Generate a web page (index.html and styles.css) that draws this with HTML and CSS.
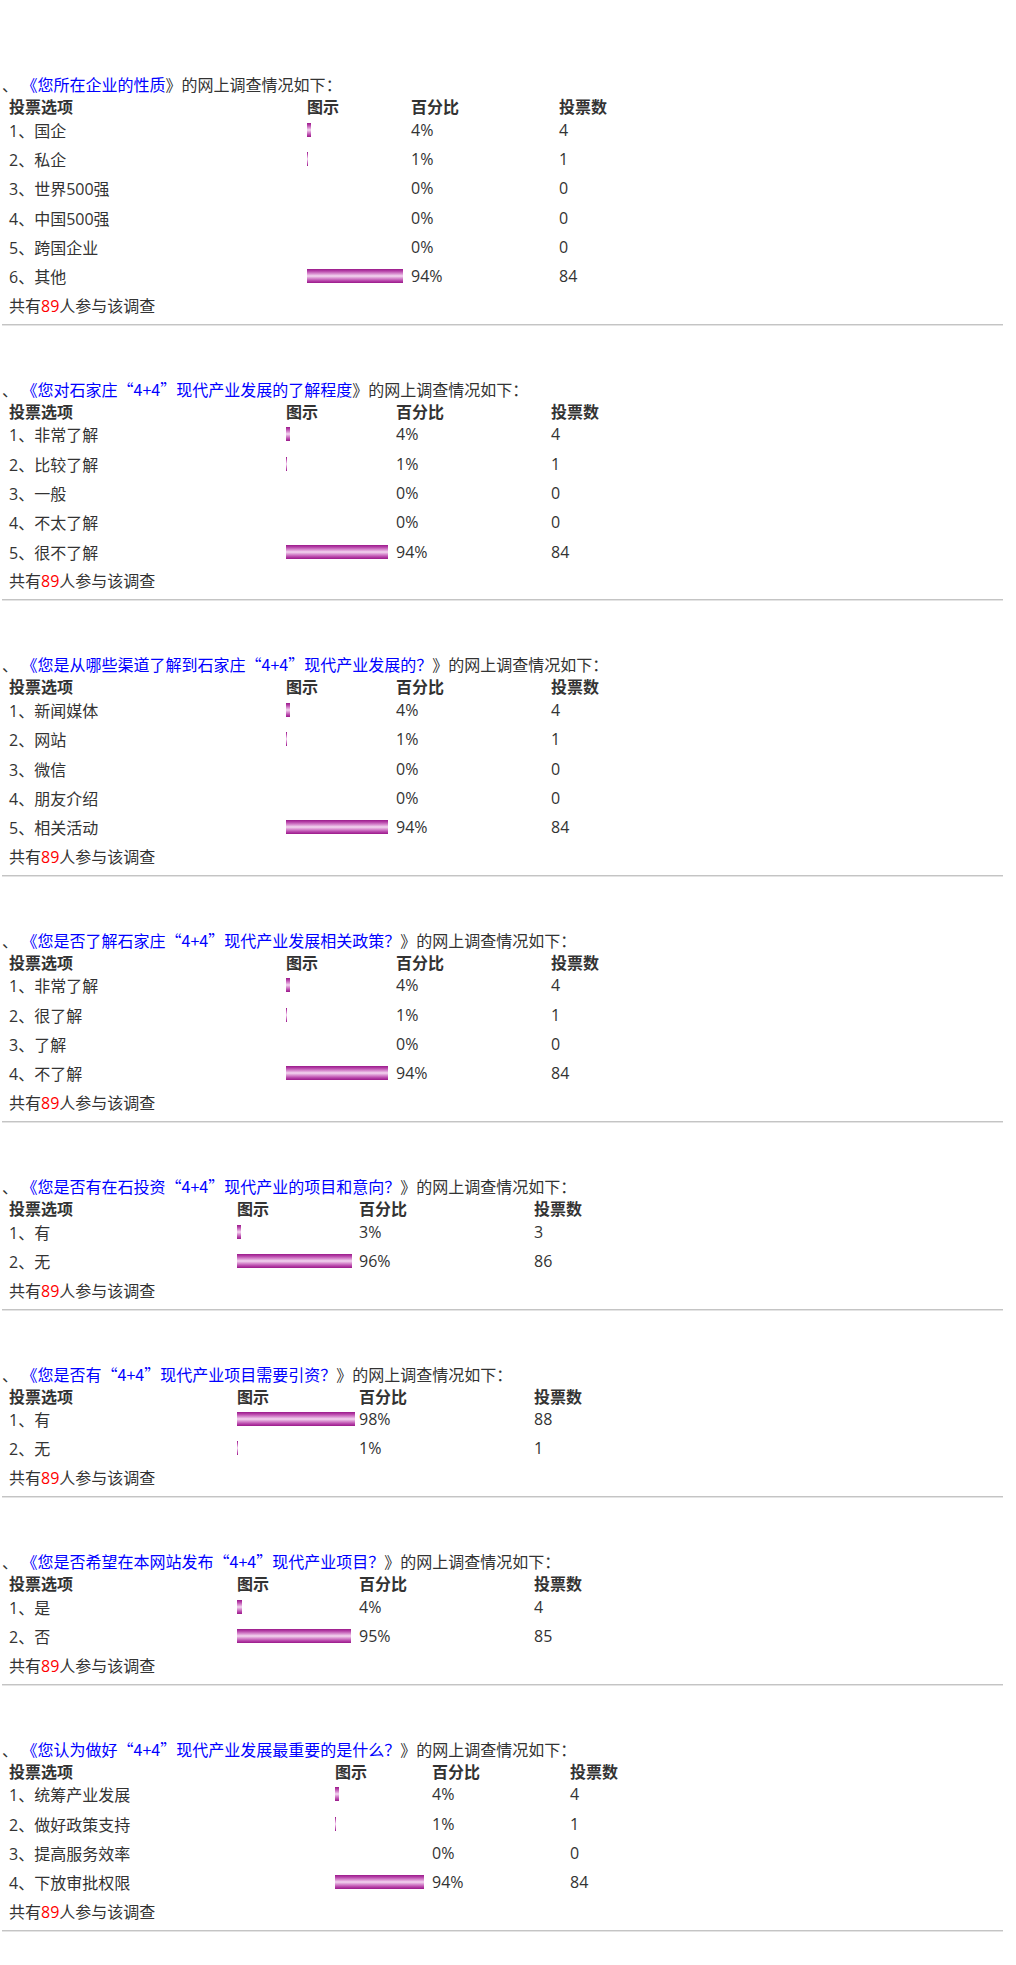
FILE: index.html
```html
<!DOCTYPE html>
<html lang="zh-CN">
<head>
<meta charset="utf-8">
<title>网上调查</title>
<link rel="stylesheet" href="styles.css">
</head>
<body>
<div class="page">

<section class="survey s1">
  <div class="title">、 <a href="#">《您所在企业的性质</a>》的网上调查情况如下<span class="punc">：</span></div>
  <div class="row head"><span>投票选项</span><span>图示</span><span>百分比</span><span>投票数</span></div>
  <div class="row"><span>1、国企</span><span class="cell-bar"><i class="bar" style="width:4%"></i></span><span>4%</span><span>4</span></div>
  <div class="row"><span>2、私企</span><span class="cell-bar"><i class="bar" style="width:1%"></i></span><span>1%</span><span>1</span></div>
  <div class="row"><span>3、世界500强</span><span class="cell-bar"></span><span>0%</span><span>0</span></div>
  <div class="row"><span>4、中国500强</span><span class="cell-bar"></span><span>0%</span><span>0</span></div>
  <div class="row"><span>5、跨国企业</span><span class="cell-bar"></span><span>0%</span><span>0</span></div>
  <div class="row"><span>6、其他</span><span class="cell-bar"><i class="bar" style="width:94%"></i></span><span>94%</span><span>84</span></div>
  <div class="total">共有<em>89</em>人参与该调查</div>
</section>
<hr class="sep">

<section class="survey s2">
  <div class="title">、 <a href="#">《您对石家庄“4+4”现代产业发展的了解程度</a>》的网上调查情况如下<span class="punc">：</span></div>
  <div class="row head"><span>投票选项</span><span>图示</span><span>百分比</span><span>投票数</span></div>
  <div class="row"><span>1、非常了解</span><span class="cell-bar"><i class="bar" style="width:4%"></i></span><span>4%</span><span>4</span></div>
  <div class="row"><span>2、比较了解</span><span class="cell-bar"><i class="bar" style="width:1%"></i></span><span>1%</span><span>1</span></div>
  <div class="row"><span>3、一般</span><span class="cell-bar"></span><span>0%</span><span>0</span></div>
  <div class="row"><span>4、不太了解</span><span class="cell-bar"></span><span>0%</span><span>0</span></div>
  <div class="row"><span>5、很不了解</span><span class="cell-bar"><i class="bar" style="width:94%"></i></span><span>94%</span><span>84</span></div>
  <div class="total">共有<em>89</em>人参与该调查</div>
</section>
<hr class="sep">

<section class="survey s2">
  <div class="title">、 <a href="#">《您是从哪些渠道了解到石家庄“4+4”现代产业发展的<span class="punc">？</span></a>》的网上调查情况如下<span class="punc">：</span></div>
  <div class="row head"><span>投票选项</span><span>图示</span><span>百分比</span><span>投票数</span></div>
  <div class="row"><span>1、新闻媒体</span><span class="cell-bar"><i class="bar" style="width:4%"></i></span><span>4%</span><span>4</span></div>
  <div class="row"><span>2、网站</span><span class="cell-bar"><i class="bar" style="width:1%"></i></span><span>1%</span><span>1</span></div>
  <div class="row"><span>3、微信</span><span class="cell-bar"></span><span>0%</span><span>0</span></div>
  <div class="row"><span>4、朋友介绍</span><span class="cell-bar"></span><span>0%</span><span>0</span></div>
  <div class="row"><span>5、相关活动</span><span class="cell-bar"><i class="bar" style="width:94%"></i></span><span>94%</span><span>84</span></div>
  <div class="total">共有<em>89</em>人参与该调查</div>
</section>
<hr class="sep">

<section class="survey s2">
  <div class="title">、 <a href="#">《您是否了解石家庄“4+4”现代产业发展相关政策<span class="punc">？</span></a>》的网上调查情况如下<span class="punc">：</span></div>
  <div class="row head"><span>投票选项</span><span>图示</span><span>百分比</span><span>投票数</span></div>
  <div class="row"><span>1、非常了解</span><span class="cell-bar"><i class="bar" style="width:4%"></i></span><span>4%</span><span>4</span></div>
  <div class="row"><span>2、很了解</span><span class="cell-bar"><i class="bar" style="width:1%"></i></span><span>1%</span><span>1</span></div>
  <div class="row"><span>3、了解</span><span class="cell-bar"></span><span>0%</span><span>0</span></div>
  <div class="row"><span>4、不了解</span><span class="cell-bar"><i class="bar" style="width:94%"></i></span><span>94%</span><span>84</span></div>
  <div class="total">共有<em>89</em>人参与该调查</div>
</section>
<hr class="sep">

<section class="survey s5">
  <div class="title">、 <a href="#">《您是否有在石投资“4+4”现代产业的项目和意向<span class="punc">？</span></a>》的网上调查情况如下<span class="punc">：</span></div>
  <div class="row head"><span>投票选项</span><span>图示</span><span>百分比</span><span>投票数</span></div>
  <div class="row"><span>1、有</span><span class="cell-bar"><i class="bar" style="width:3%"></i></span><span>3%</span><span>3</span></div>
  <div class="row"><span>2、无</span><span class="cell-bar"><i class="bar" style="width:96%"></i></span><span>96%</span><span>86</span></div>
  <div class="total">共有<em>89</em>人参与该调查</div>
</section>
<hr class="sep">

<section class="survey s5">
  <div class="title">、 <a href="#">《您是否有“4+4”现代产业项目需要引资<span class="punc">？</span></a>》的网上调查情况如下<span class="punc">：</span></div>
  <div class="row head"><span>投票选项</span><span>图示</span><span>百分比</span><span>投票数</span></div>
  <div class="row"><span>1、有</span><span class="cell-bar"><i class="bar" style="width:98%"></i></span><span>98%</span><span>88</span></div>
  <div class="row"><span>2、无</span><span class="cell-bar"><i class="bar" style="width:1%"></i></span><span>1%</span><span>1</span></div>
  <div class="total">共有<em>89</em>人参与该调查</div>
</section>
<hr class="sep">

<section class="survey s5">
  <div class="title">、 <a href="#">《您是否希望在本网站发布“4+4”现代产业项目<span class="punc">？</span></a>》的网上调查情况如下<span class="punc">：</span></div>
  <div class="row head"><span>投票选项</span><span>图示</span><span>百分比</span><span>投票数</span></div>
  <div class="row"><span>1、是</span><span class="cell-bar"><i class="bar" style="width:4%"></i></span><span>4%</span><span>4</span></div>
  <div class="row"><span>2、否</span><span class="cell-bar"><i class="bar" style="width:95%"></i></span><span>95%</span><span>85</span></div>
  <div class="total">共有<em>89</em>人参与该调查</div>
</section>
<hr class="sep">

<section class="survey s8">
  <div class="title">、 <a href="#">《您认为做好“4+4”现代产业发展最重要的是什么<span class="punc">？</span></a>》的网上调查情况如下<span class="punc">：</span></div>
  <div class="row head"><span>投票选项</span><span>图示</span><span>百分比</span><span>投票数</span></div>
  <div class="row"><span>1、统筹产业发展</span><span class="cell-bar"><i class="bar" style="width:4%"></i></span><span>4%</span><span>4</span></div>
  <div class="row"><span>2、做好政策支持</span><span class="cell-bar"><i class="bar" style="width:1%"></i></span><span>1%</span><span>1</span></div>
  <div class="row"><span>3、提高服务效率</span><span class="cell-bar"></span><span>0%</span><span>0</span></div>
  <div class="row"><span>4、下放审批权限</span><span class="cell-bar"><i class="bar" style="width:94%"></i></span><span>94%</span><span>84</span></div>
  <div class="total">共有<em>89</em>人参与该调查</div>
</section>
<hr class="sep">

</div>
</body>
</html>
```

FILE: styles.css
```css
html, body {
  margin: 0;
  padding: 0;
  background: #fff;
}

body {
  font-family: "Open Sans", "Noto Sans CJK SC", sans-serif;
  font-size: 16px;
  color: #333;
  text-spacing-trim: space-all;
}

.page {
  width: 1001px;
  padding: 70px 0 0 2px;
}

.survey {
  display: flex;
  flex-direction: column;
}

.title {
  height: 29px;
  line-height: 29px;
  white-space: nowrap;
  font-family: "Noto Sans CJK SC", sans-serif;
  text-spacing-trim: space-all;
}

.title a {
  color: #0000ff;
  text-decoration: none;
}

.punc {
  font-family: "Noto Sans CJK JP", "Noto Sans CJK SC", sans-serif;
}

.row {
  display: grid;
  grid-template-columns: var(--cols);
  align-items: center;
  height: 29.3px;
  padding-left: 7px;
  white-space: nowrap;
}

.row.head {
  height: 16px;
  line-height: 16px;
  font-weight: bold;
}

.cell-bar {
  display: flex;
  align-items: center;
  height: 14px;
  padding-right: 2px;
}

.bar {
  display: block;
  height: 14px;
  min-width: 1px;
  background: linear-gradient(to bottom,
    #9a1a8a 0%,
    #b43ea6 14%,
    #d27ec8 30%,
    #f3d6f0 50%,
    #d27ec8 70%,
    #b43ea6 86%,
    #9a1a8a 100%);
}

.total {
  height: 31px;
  line-height: 31px;
  padding-left: 7px;
}

.total em {
  font-style: normal;
  color: #ff0000;
}

.sep {
  margin: 2px 0 49px 0;
  height: 0;
  border: 0;
  border-top: 1px solid #c4c4c4;
  border-bottom: 1px solid #e4e4e4;
}

.s1 { --cols: 298px 104px 148px 1fr; }
.s2 { --cols: 277px 110px 155px 1fr; }
.s5 { --cols: 228px 122px 175px 1fr; }
.s8 { --cols: 326px 97px 138px 1fr; }
```
